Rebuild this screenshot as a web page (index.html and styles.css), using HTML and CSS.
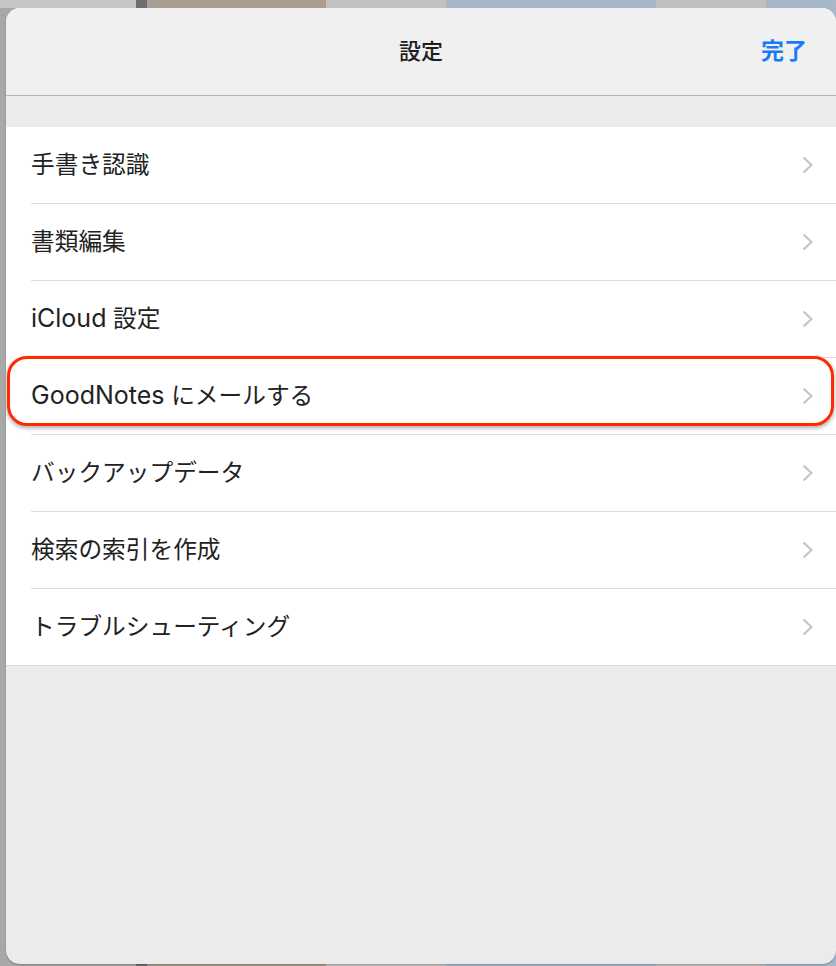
FILE: index.html
```html
<!DOCTYPE html>
<html lang="ja">
<head>
    <meta charset="UTF-8">
    <meta name="viewport" content="width=device-width, initial-scale=1.0">
    <title>設定</title>
    <link rel="stylesheet" href="styles.css">
</head>
<body>
    <!-- Fondo detrás de la hoja modal -->
    <div class="fondo">
        <div class="col col-gris"></div>
        <div class="col col-oscura"></div>
        <div class="col col-tostado"></div>
        <div class="col col-clara"></div>
        <div class="col col-azul"></div>
        <div class="col col-clara2"></div>
        <div class="col col-azul2"></div>
    </div>

    <div class="hoja">
        <header class="barra">
            <div class="titulo">設定</div>
            <button class="listo">完了</button>
        </header>

        <div class="espacio"></div>

        <ul class="lista">
            <li class="fila"><span class="texto">手書き認識</span><svg class="flecha" viewBox="0 0 11 18"><polyline points="1.5,1.5 9.5,9 1.5,16.5"/></svg></li>
            <li class="fila"><span class="texto">書類編集</span><svg class="flecha" viewBox="0 0 11 18"><polyline points="1.5,1.5 9.5,9 1.5,16.5"/></svg></li>
            <li class="fila"><span class="texto"><span class="latin">iCloud</span> 設定</span><svg class="flecha" viewBox="0 0 11 18"><polyline points="1.5,1.5 9.5,9 1.5,16.5"/></svg></li>
            <li class="fila"><span class="texto"><span class="latin">GoodNotes</span> にメールする</span><svg class="flecha" viewBox="0 0 11 18"><polyline points="1.5,1.5 9.5,9 1.5,16.5"/></svg></li>
            <li class="fila"><span class="texto">バックアップデータ</span><svg class="flecha" viewBox="0 0 11 18"><polyline points="1.5,1.5 9.5,9 1.5,16.5"/></svg></li>
            <li class="fila"><span class="texto">検索の索引を作成</span><svg class="flecha" viewBox="0 0 11 18"><polyline points="1.5,1.5 9.5,9 1.5,16.5"/></svg></li>
            <li class="fila"><span class="texto">トラブルシューティング</span><svg class="flecha" viewBox="0 0 11 18"><polyline points="1.5,1.5 9.5,9 1.5,16.5"/></svg></li>
        </ul>

        <!-- Marco rojo de resaltado -->
        <div class="resaltado"></div>
    </div>
</body>
</html>
```

FILE: styles.css
```css
body {
    margin: 0;
    width: 836px;
    height: 966px;
    position: relative;
    overflow: hidden;
    font-family: Inter, "Noto Sans CJK JP", sans-serif;
    background: #a9a9a9;
}

.fondo {
    display: flex;
    height: 966px;
}

.col { height: 100%; }
.col-gris { width: 136px; background: linear-gradient(#c6c6c6 0, #c6c6c6 8px, #a8a8a8 8px); }
.col-oscura { width: 11px; background: #6e6e72; }
.col-tostado { width: 179px; background: #a99e91; }
.col-clara { width: 120px; background: #c2c2c2; }
.col-azul { width: 210px; background: #a6b8c9; }
.col-clara2 { width: 110px; background: #c0c0c0; }
.col-azul2 { flex: 1; background: #a6b8c9; }

.hoja {
    position: absolute;
    top: 8px;
    left: 6px;
    width: 830px;
    height: 956px;
    background: #ebebeb;
    border-radius: 14px;
    overflow: hidden;
    box-shadow: 0 1px 2px rgba(0, 0, 0, 0.25);
}

.barra {
    height: 87px;
    background: #f0f0f0;
    border-bottom: 1px solid #b4b4b4;
    display: flex;
    align-items: center;
    justify-content: center;
    position: relative;
}

.titulo {
    font-size: 22px;
    font-weight: 500;
    color: #1e1e1e;
    padding-bottom: 5px;
}

.listo {
    position: absolute;
    right: 29px;
    top: 24px;
    border: none;
    background: none;
    padding: 0;
    font-family: inherit;
    font-size: 23px;
    font-weight: 600;
    color: #1a7cf5;
}

.espacio {
    height: 31px;
}

.lista {
    list-style: none;
    margin: 0;
    padding: 0 0 0 25px;
    background: #ffffff;
    border-bottom: 1px solid #d9d9d9;
}

.fila {
    height: 76px;
    display: flex;
    align-items: center;
    justify-content: space-between;
    padding-right: 23px;
    border-bottom: 1px solid #dedede;
    font-size: 23.7px;
    color: #222222;
}

.fila:last-child {
    border-bottom: none;
}

.texto {
    padding-bottom: 5px;
}

.latin {
    font-size: 25px;
}

.flecha {
    width: 11px;
    height: 18px;
    fill: none;
    stroke: #c4c4c8;
    stroke-width: 2.2;
}

.resaltado {
    position: absolute;
    top: 348px;
    left: 1px;
    width: 821px;
    height: 64px;
    border: 3.5px solid #ff2a00;
    border-radius: 20px;
    box-shadow: 0 2px 4px rgba(0, 0, 0, 0.35);
}
```
